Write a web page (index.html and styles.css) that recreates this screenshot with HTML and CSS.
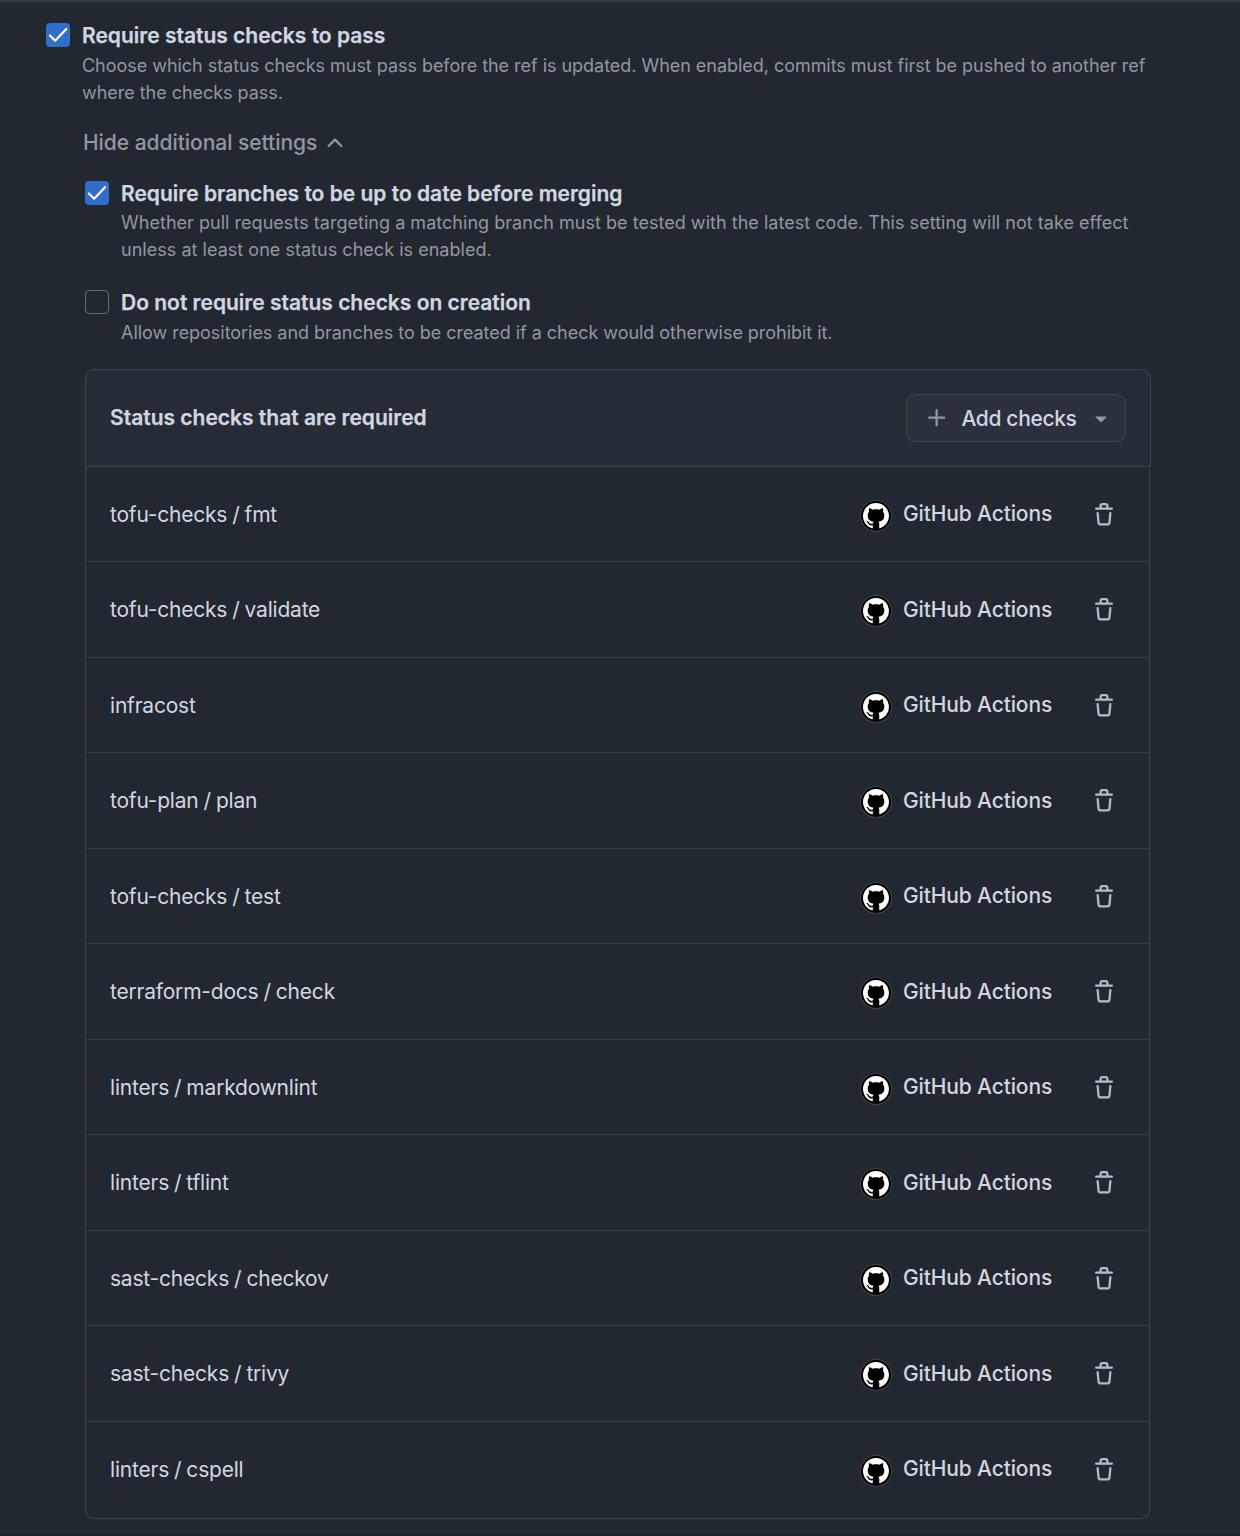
FILE: index.html
```html
<!DOCTYPE html>
<html lang="en">
<head>
<meta charset="utf-8">
<title>Branch ruleset settings</title>
<link rel="stylesheet" href="styles.css">
</head>
<body>
<svg class="sprite" aria-hidden="true">
  <symbol id="check" viewBox="0 0 24 24"><path d="M3.9 12.5 9.1 17.7 20.3 6.1" fill="none" stroke="#fff" stroke-width="2.2" stroke-linecap="round" stroke-linejoin="round"/></symbol>
  <symbol id="trash" viewBox="0 0 16 16"><path d="M11 1.75V3h2.25a.75.75 0 0 1 0 1.5H2.75a.75.75 0 0 1 0-1.5H5V1.75C5 .784 5.784 0 6.75 0h2.5C10.216 0 11 .784 11 1.75ZM4.496 6.675l.66 6.6a.25.25 0 0 0 .249.225h5.19a.25.25 0 0 0 .249-.225l.66-6.6a.75.75 0 0 1 1.492.149l-.66 6.6A1.748 1.748 0 0 1 10.595 15h-5.19a1.75 1.75 0 0 1-1.741-1.575l-.66-6.6a.75.75 0 1 1 1.492-.15ZM6.5 1.75V3h3V1.75a.25.25 0 0 0-.25-.25h-2.5a.25.25 0 0 0-.25.25Z"/></symbol>
  <symbol id="mark" viewBox="0 0 16 16"><path d="M8 0C3.58 0 0 3.58 0 8c0 3.54 2.29 6.53 5.47 7.59.4.07.55-.17.55-.38 0-.19-.01-.82-.01-1.49-2.01.37-2.53-.49-2.69-.94-.09-.23-.48-.94-.82-1.13-.28-.15-.68-.52-.01-.53.63-.01 1.08.58 1.23.82.72 1.21 1.87.87 2.33.66.07-.52.28-.87.51-1.07-1.78-.2-3.64-.89-3.64-3.95 0-.87.31-1.59.82-2.15-.08-.2-.36-1.02.08-2.12 0 0 .67-.21 2.2.82.64-.18 1.32-.27 2-.27s1.36.09 2 .27c1.53-1.04 2.2-.82 2.2-.82.44 1.1.16 1.92.08 2.12.51.56.82 1.27.82 2.15 0 3.07-1.87 3.75-3.65 3.95.29.25.54.73.54 1.48 0 1.07-.01 1.93-.01 2.2 0 .21.15.46.55.38A8.01 8.01 0 0 0 16 8c0-4.42-3.58-8-8-8Z"/></symbol>
</svg>

<main class="settings">
  <section class="option">
    <span class="checkbox checked"><svg><use href="#check"/></svg></span>
    <div class="option-body">
      <h2 class="option-title">Require status checks to pass</h2>
      <p class="option-desc desc-tight">Choose which status checks must pass before the ref is updated. When enabled, commits must first be pushed to another ref<br>where the checks pass.</p>
    </div>
  </section>

  <div class="toggle">
    <span>Hide additional settings</span>
    <svg class="icon" viewBox="0 0 16 16"><path d="M3.22 10.53a.749.749 0 0 1 0-1.06l4.25-4.25a.749.749 0 0 1 1.06 0l4.25 4.25a.749.749 0 1 1-1.06 1.06L8 6.811 4.28 10.53a.749.749 0 0 1-1.06 0Z"/></svg>
  </div>

  <div class="nested">
    <section class="option branches">
      <span class="checkbox checked"><svg><use href="#check"/></svg></span>
      <div class="option-body">
        <h3 class="option-title">Require branches to be up to date before merging</h3>
        <p class="option-desc desc-loose">Whether pull requests targeting a matching branch must be tested with the latest code. This setting will not take effect<br>unless at least one status check is enabled.</p>
      </div>
    </section>
    <section class="option creation">
      <span class="checkbox"></span>
      <div class="option-body">
        <h3 class="option-title">Do not require status checks on creation</h3>
        <p class="option-desc desc-tight">Allow repositories and branches to be created if a check would otherwise prohibit it.</p>
      </div>
    </section>

    <header class="checks-header">
      <h3 class="checks-title">Status checks that are required</h3>
      <button class="add-button" type="button">
        <svg class="icon" viewBox="0 0 16 16"><path d="M7.75 2a.75.75 0 0 1 .75.75V7h4.25a.75.75 0 0 1 0 1.5H8.5v4.25a.75.75 0 0 1-1.5 0V8.5H2.75a.75.75 0 0 1 0-1.5H7V2.75A.75.75 0 0 1 7.75 2Z"/></svg>
        <span class="add-label">Add checks</span>
        <svg class="icon" viewBox="0 0 16 16"><path d="m4.427 7.427 3.396 3.396a.25.25 0 0 0 .354 0l3.396-3.396A.25.25 0 0 0 11.396 7H4.604a.25.25 0 0 0-.177.427Z"/></svg>
      </button>
    </header>
    <ul class="checks">
      <li class="check"><span class="check-name">tofu-checks / fmt</span><span class="avatar"><svg><use href="#mark"/></svg></span><span class="source">GitHub Actions</span><svg class="icon trash"><use href="#trash"/></svg></li>
      <li class="check"><span class="check-name">tofu-checks / validate</span><span class="avatar"><svg><use href="#mark"/></svg></span><span class="source">GitHub Actions</span><svg class="icon trash"><use href="#trash"/></svg></li>
      <li class="check"><span class="check-name">infracost</span><span class="avatar"><svg><use href="#mark"/></svg></span><span class="source">GitHub Actions</span><svg class="icon trash"><use href="#trash"/></svg></li>
      <li class="check"><span class="check-name">tofu-plan / plan</span><span class="avatar"><svg><use href="#mark"/></svg></span><span class="source">GitHub Actions</span><svg class="icon trash"><use href="#trash"/></svg></li>
      <li class="check"><span class="check-name">tofu-checks / test</span><span class="avatar"><svg><use href="#mark"/></svg></span><span class="source">GitHub Actions</span><svg class="icon trash"><use href="#trash"/></svg></li>
      <li class="check"><span class="check-name">terraform-docs / check</span><span class="avatar"><svg><use href="#mark"/></svg></span><span class="source">GitHub Actions</span><svg class="icon trash"><use href="#trash"/></svg></li>
      <li class="check"><span class="check-name">linters / markdownlint</span><span class="avatar"><svg><use href="#mark"/></svg></span><span class="source">GitHub Actions</span><svg class="icon trash"><use href="#trash"/></svg></li>
      <li class="check"><span class="check-name">linters / tflint</span><span class="avatar"><svg><use href="#mark"/></svg></span><span class="source">GitHub Actions</span><svg class="icon trash"><use href="#trash"/></svg></li>
      <li class="check"><span class="check-name">sast-checks / checkov</span><span class="avatar"><svg><use href="#mark"/></svg></span><span class="source">GitHub Actions</span><svg class="icon trash"><use href="#trash"/></svg></li>
      <li class="check"><span class="check-name">sast-checks / trivy</span><span class="avatar"><svg><use href="#mark"/></svg></span><span class="source">GitHub Actions</span><svg class="icon trash"><use href="#trash"/></svg></li>
      <li class="check"><span class="check-name">linters / cspell</span><span class="avatar"><svg><use href="#mark"/></svg></span><span class="source">GitHub Actions</span><svg class="icon trash"><use href="#trash"/></svg></li>
    </ul>
  </div>
</main>
</body>
</html>
```
FILE: styles.css
```css
* { box-sizing: border-box; }

body {
  margin: 0;
  background: #212830;
  color: #d1d7e0;
  font-family: Inter, "Liberation Sans", sans-serif;
  font-size: 21px;
  line-height: 30px;
}

h2, h3, p, ul { margin: 0; padding: 0; }

.sprite { display: none; }

.settings {
  height: 1536px;
  border-top: 2px solid #3a3a3a;
  border-bottom: 2px solid #1c2128;
  padding: 19px 0 0 46px;
}

.option { display: flex; gap: 12px; }

.option-title,
.checks-title {
  font-size: 21px;
  font-weight: 600;
  line-height: 30px;
  -webkit-text-stroke: 0.25px currentColor;
}

.option-title { margin-bottom: 1px; }

.option-desc {
  color: #9198a1;
  font-size: 18px;
  line-height: 27px;
  white-space: nowrap;
}

.desc-tight { letter-spacing: -0.035px; }
.desc-loose { letter-spacing: 0.03px; }

.checkbox {
  flex: none;
  width: 24px;
  height: 24px;
  margin-top: 2px;
  border: 1px solid #656c76;
  border-radius: 4px;
}

.checkbox.checked { border: 0; background: #316dca; }
.checkbox svg { display: block; width: 24px; height: 24px; }

.icon {
  display: block;
  flex: none;
  width: 24px;
  height: 24px;
  fill: #9198a1;
}

.toggle {
  display: flex;
  align-items: center;
  gap: 6px;
  margin: 22px 0 0 37px;
  color: #9198a1;
  font-weight: 500;
  letter-spacing: -0.04px;
}

.nested { margin-left: 39px; }
.branches { margin-top: 21px; }
.creation { margin-top: 25px; }
.branches .option-title { line-height: 29px; }

.checks-header {
  display: flex;
  align-items: center;
  justify-content: space-between;
  width: 1066px;
  height: 98px;
  margin-top: 23px;
  padding: 0 24px;
  border: 1px solid #3d444d;
  border-radius: 9px 9px 0 0;
  background: #262c36;
}

.add-button {
  display: flex;
  align-items: center;
  width: 220px;
  height: 48px;
  padding: 0 0 0 18px;
  border: 1px solid #3d444d;
  border-radius: 9px;
  background: #2a313c;
  color: #d1d7e0;
  font: 500 21px/30px Inter, "Liberation Sans", sans-serif;
}

.add-label { width: 116px; margin: 2px 12px 0 12px; letter-spacing: -0.35px; white-space: nowrap; }

.checks {
  width: 1065px;
  border: solid #3d444d;
  border-width: 0 1px 1px;
  border-radius: 0 0 9px 9px;
  list-style: none;
}

.check {
  display: flex;
  align-items: center;
  height: 95.5px;
  padding: 0 33px 0 24px;
}

.check:first-child { height: 94.4px; }
.check:last-child { height: 97px; padding-bottom: 1px; }
.check + .check { border-top: 1px solid #373e47; }

.check-name { flex: 1; padding-top: 1px; letter-spacing: -0.21px; word-spacing: -0.7px; }

.avatar {
  display: flex;
  align-items: center;
  justify-content: center;
  width: 30px;
  height: 30px;
  margin: 3px 12px 0 0;
  border-radius: 50%;
  background: #000;
  box-shadow: 0 0 0 1px #3d444d;
}

.avatar svg { width: 26px; height: 26px; fill: #fff; }

.source { width: 189px; font-weight: 500; letter-spacing: -0.13px; }

.trash { margin-top: 1px; fill: #b7bdc8; }
```
